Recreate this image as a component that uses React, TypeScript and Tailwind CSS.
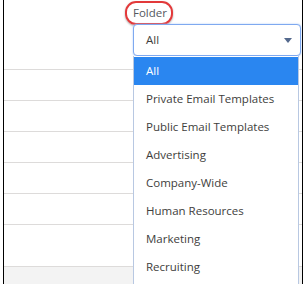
import React from "react";

const items = [
  "All",
  "Private Email Templates",
  "Public Email Templates",
  "Advertising",
  "Company-Wide",
  "Human Resources",
  "Marketing",
  "Recruiting",
];

export default function App() {
  return (
    <div
      className="w-[305px] h-[284px] bg-white overflow-hidden pl-[3px] pr-[2px]"
      style={{ fontFamily: '"Open Sans", "Liberation Sans", sans-serif' }}
    >
      <div className="relative h-full border-x border-black flex flex-col">
        <div className="h-[70px] shrink-0 border-b border-[#dddbda]" />
        <div className="h-[31px] shrink-0 border-b border-[#dddbda]" />
        <div className="h-[31px] shrink-0 border-b border-[#dddbda]" />
        <div className="h-[31px] shrink-0 border-b border-[#dddbda]" />
        <div className="h-[31px] shrink-0 border-b border-[#dddbda]" />
        <div className="h-[31px] shrink-0 border-b border-[#dddbda]" />
        <div className="h-[42px] shrink-0 border-b border-[#dddbda]" />
        <div className="flex-1 bg-[#f3f3f3]" />

        {/* Folder label with red highlight */}
        <div className="absolute left-[121px] top-[1px] w-[48px] h-[24px] rounded-[11px] border-2 border-[#e2393a] shadow-[0_1px_2px_rgba(0,0,0,0.35)]" />
        <div className="absolute left-[129px] top-[4px] text-[11.5px] leading-[18px] text-[#54585e]">
          Folder
        </div>

        {/* Select input */}
        <div className="absolute left-[129px] top-[24px] w-[168px] h-[32px] rounded-[4px] border border-[#7fa9f0] bg-white flex items-center pl-[12px] pr-[8px] shadow-[0_0_2px_#a9c8f5]">
          <span className="flex-1 text-[11.5px] text-[#3e3e3c]">All</span>
          <svg width="8" height="5" viewBox="0 0 8 5">
            <path d="M0 0 L8 0 L4 5 Z" fill="#54698d" />
          </svg>
        </div>

        {/* Dropdown list */}
        <div className="absolute left-[129px] top-[56px] w-[166px] h-[240px] bg-white border-x border-[#b8c8e2] pt-[1px]">
          {items.map((it, i) => (
            <div
              key={it}
              className={
                i === 0
                  ? "h-[28px] flex items-center pl-[12px] text-[11.5px] bg-[#2a86f0] text-white"
                  : "h-[28px] flex items-center pl-[12px] text-[11.5px] text-[#3e3e3c]"
              }
            >
              {it}
            </div>
          ))}
        </div>
      </div>
    </div>
  );
}
